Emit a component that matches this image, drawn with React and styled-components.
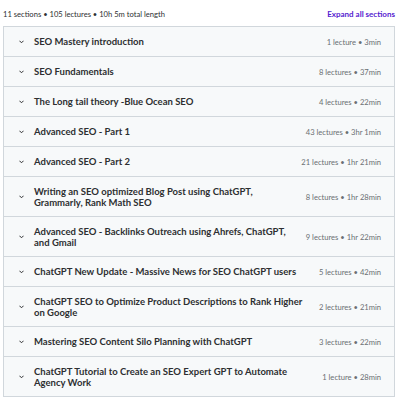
import React from "react";
import styled, { createGlobalStyle } from "styled-components";

const GlobalStyle = createGlobalStyle`
  html, body {
    margin: 0;
    padding: 0;
    background: #ffffff;
  }
  body {
    font-family: "Lato", "Liberation Sans", sans-serif;
    color: #2d2f31;
  }
`;

const Page = styled.div`
  width: 400px;
  padding: 7px 5px 0 3px;
  box-sizing: border-box;
`;

const TopBar = styled.div`
  display: flex;
  align-items: center;
  justify-content: space-between;
  height: 14px;
  margin-bottom: 5px;
`;

const Summary = styled.span`
  font-size: 7.6px;
  color: #2d2f31;
`;

const ExpandAll = styled.button`
  border: none;
  background: none;
  padding: 0;
  font-family: inherit;
  font-size: 8px;
  font-weight: 700;
  color: #5624d0;
  cursor: pointer;
`;

const Curriculum = styled.div`
  border: 1px solid #d1d7dc;
  border-bottom: none;
`;

const Section = styled.div`
  display: flex;
  align-items: center;
  gap: 10px;
  background: #f7f9fa;
  border-bottom: 1px solid #d1d7dc;
  padding: 0 13px 0 15px;
  min-height: ${(p) => (p.$tall ? 39 : 29)}px;
`;

const Chevron = styled.svg`
  flex: none;
  width: 5px;
  height: 4px;
`;

const Title = styled.div`
  flex: 1;
  font-size: 9.5px;
  font-weight: 700;
  line-height: 11px;
`;

const Meta = styled.div`
  flex: none;
  font-size: 7.6px;
  color: #6a6f73;
`;

const sections = [
  { title: "SEO Mastery introduction", meta: "1 lecture • 3min" },
  { title: "SEO Fundamentals", meta: "8 lectures • 37min" },
  { title: "The Long tail theory -Blue Ocean SEO", meta: "4 lectures • 22min" },
  { title: "Advanced SEO - Part 1", meta: "43 lectures • 3hr 1min" },
  { title: "Advanced SEO - Part 2", meta: "21 lectures • 1hr 21min" },
  {
    title: "Writing an SEO optimized Blog Post using ChatGPT, Grammarly, Rank Math SEO",
    meta: "8 lectures • 1hr 28min",
    tall: true,
  },
  {
    title: "Advanced SEO - Backlinks Outreach using Ahrefs, ChatGPT, and Gmail",
    meta: "9 lectures • 1hr 22min",
    tall: true,
  },
  { title: "ChatGPT New Update - Massive News for SEO ChatGPT users", meta: "5 lectures • 42min" },
  {
    title: "ChatGPT SEO to Optimize Product Descriptions to Rank Higher on Google",
    meta: "2 lectures • 21min",
    tall: true,
  },
  { title: "Mastering SEO Content Silo Planning with ChatGPT", meta: "3 lectures • 22min" },
  {
    title: "ChatGPT Tutorial to Create an SEO Expert GPT to Automate Agency Work",
    meta: "1 lecture • 28min",
    tall: true,
  },
];

export default function App() {
  return (
    <>
      <GlobalStyle />
      <Page>
        <TopBar>
          <Summary>11 sections • 105 lectures • 10h 5m total length</Summary>
          <ExpandAll>Expand all sections</ExpandAll>
        </TopBar>
        <Curriculum>
          {sections.map((s, i) => (
            <Section key={i} $tall={s.tall}>
              <Chevron viewBox="0 0 5 4">
                <path d="M0.7 1 L2.5 2.8 L4.3 1" fill="none" stroke="#2d2f31" strokeWidth="1" strokeLinecap="round" strokeLinejoin="round" />
              </Chevron>
              <Title>{s.title}</Title>
              <Meta>{s.meta}</Meta>
            </Section>
          ))}
        </Curriculum>
      </Page>
    </>
  );
}
